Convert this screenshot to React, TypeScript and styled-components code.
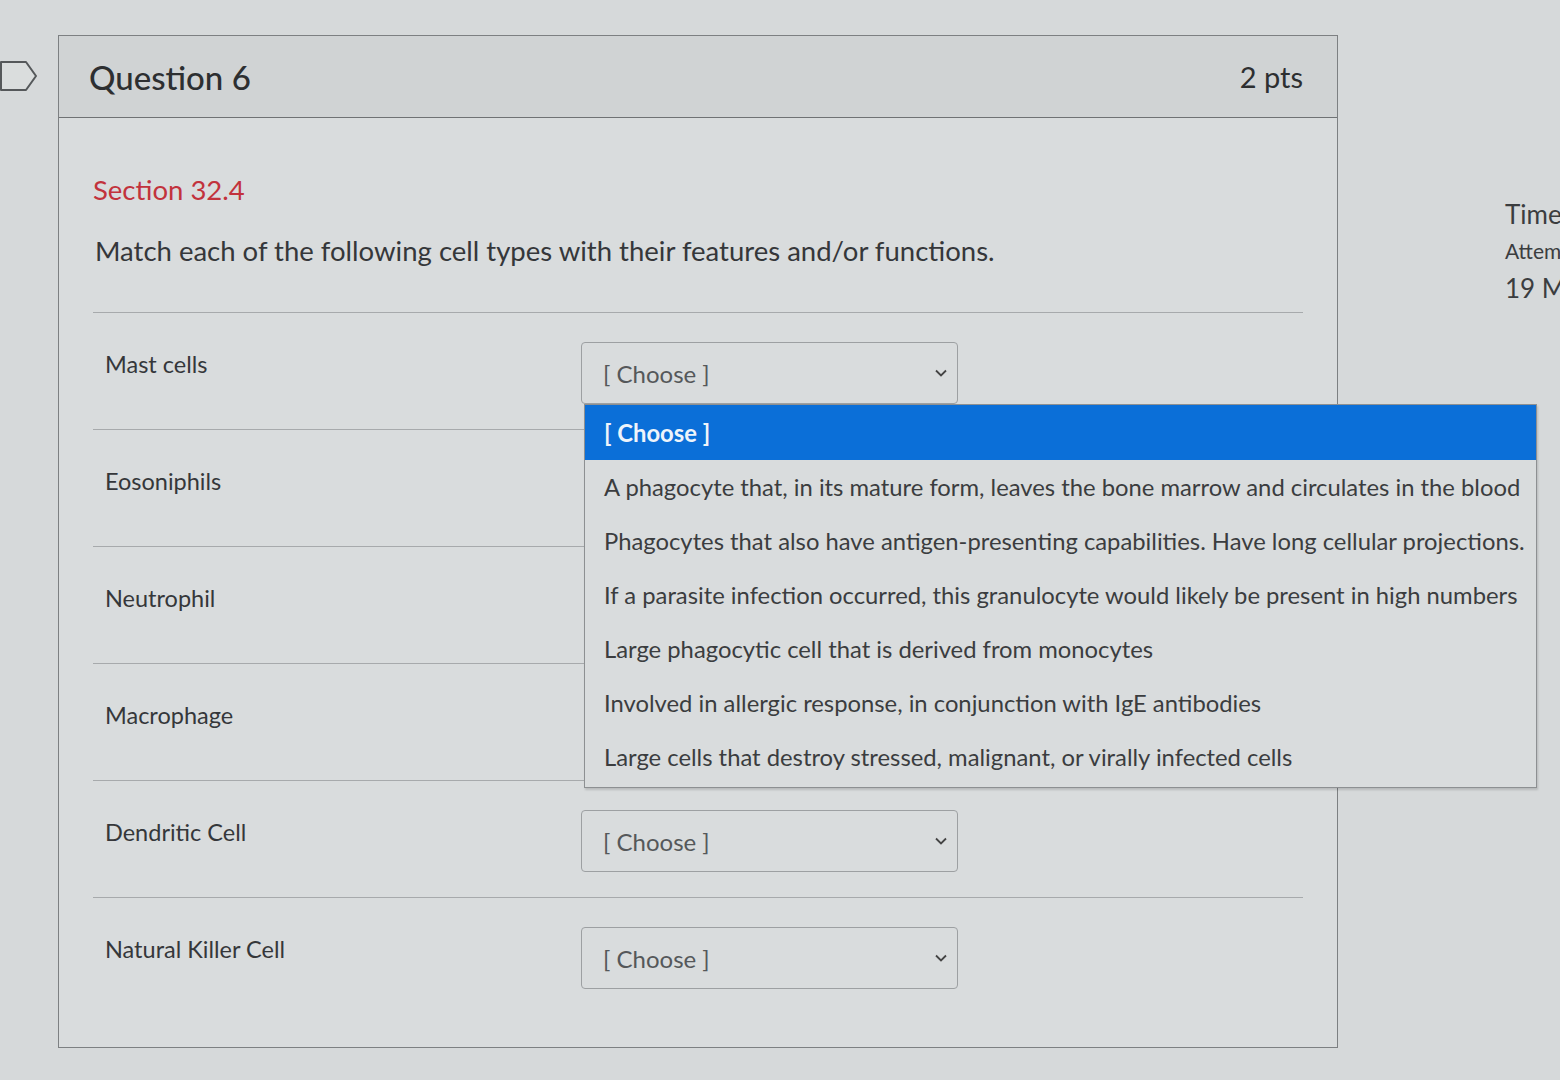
import React, { FunctionComponent } from "react";
import styled, { createGlobalStyle } from "styled-components";

const GlobalStyle = createGlobalStyle`
  html, body {
    margin: 0;
    padding: 0;
    background: #d6d9da;
    overflow: hidden;
    font-family: Lato, "Open Sans", "Liberation Sans", sans-serif;
    color: #3b3d3f;
  }
`;

const Page = styled.div`
  display: flex;
  width: 1560px;
  height: 1080px;
  background: #d6d9da;
`;

const Gutter = styled.div`
  width: 58px;
  flex-shrink: 0;
  padding-top: 60px;
  box-sizing: border-box;
`;

const Card = styled.div`
  margin-top: 35px;
  width: 1280px;
  height: 1013px;
  flex-shrink: 0;
  border: 1px solid #7d8082;
  background: #d9dcdd;
  box-sizing: border-box;
  display: flex;
  flex-direction: column;
`;

const CardHead = styled.div`
  height: 81px;
  display: flex;
  align-items: center;
  justify-content: space-between;
  padding: 0 34px 0 30px;
  background: #d0d3d4;
  border-bottom: 1px solid #6f7274;
  flex-shrink: 0;
`;

const QuestionTitle = styled.h2`
  margin: 0;
  font-size: 33px;
  font-weight: 500;
  color: #2d2f31;
`;

const Points = styled.span`
  font-size: 29px;
  color: #2d2f31;
`;

const CardBody = styled.div`
  padding: 55px 34px 0 34px;
`;

const SectionTitle = styled.p`
  margin: 0;
  font-size: 27.5px;
  color: #c2323c;
`;

const Prompt = styled.p`
  margin: 28px 0 0 2px;
  font-size: 27.5px;
  color: #35373a;
`;

const Rows = styled.div`
  margin-top: 45px;
  border-top: 1px solid #a7aaac;
`;

const Row = styled.div<{ last?: boolean }>`
  display: grid;
  grid-template-columns: 488px 377px;
  height: 117px;
  padding-top: 29px;
  box-sizing: border-box;
  border-bottom: ${(p) => (p.last ? "none" : "1px solid #a7aaac")};
`;

const Label = styled.div`
  padding: 8px 0 0 12px;
  font-size: 23.5px;
  color: #35373a;
`;

const SelectWrap = styled.div`
  position: relative;
`;

const Select = styled.div`
  height: 62px;
  display: flex;
  align-items: center;
  justify-content: space-between;
  padding: 0 8px 0 21px;
  border: 1px solid #9da0a2;
  border-radius: 4px;
  background: #d9dcdd;
  box-sizing: border-box;
  font-size: 24px;
  color: #55585a;
`;

const Options = styled.ul`
  position: absolute;
  top: 62px;
  left: 3px;
  width: 951px;
  margin: 0;
  padding: 0 0 3px 0;
  list-style: none;
  background: #d9dcdd;
  border: 1px solid #8d9092;
  box-shadow: 1px 2px 2px rgba(0, 0, 0, 0.15);
  z-index: 5;
`;

const Option = styled.li<{ active?: boolean }>`
  height: ${(p) => (p.active ? "55px" : "54px")};
  display: flex;
  align-items: center;
  padding-left: 19px;
  font-size: 23.8px;
  white-space: nowrap;
  background: ${(p) => (p.active ? "#0b6fd8" : "transparent")};
  color: ${(p) => (p.active ? "#eef4fb" : "#3b3d3f")};
  font-weight: ${(p) => (p.active ? 700 : 400)};
`;

const Sidebar = styled.div`
  margin-left: 167px;
  padding-top: 196px;
  white-space: nowrap;
  color: #3b3d3f;
`;

const SideLine = styled.div<{ small?: boolean }>`
  font-size: ${(p) => (p.small ? "21px" : "26px")};
  line-height: ${(p) => (p.small ? "38px" : "36px")};
`;

const Chevron = () => (
  <svg width="16" height="16" viewBox="0 0 16 16">
    <path d="M3 5.5 L8 10.5 L13 5.5" fill="none" stroke="#444" strokeWidth="1.8" />
  </svg>
);

const FlagIcon = () => (
  <svg width="38" height="32" viewBox="0 0 38 32">
    <path
      d="M1 2 H26 L36 16 L26 30 H1 Z"
      fill="#dadddd"
      stroke="#55585a"
      strokeWidth="2"
      strokeLinejoin="round"
    />
  </svg>
);

const cells = [
  "Mast cells",
  "Eosoniphils",
  "Neutrophil",
  "Macrophage",
  "Dendritic Cell",
  "Natural Killer Cell",
];

const choices = [
  "A phagocyte that, in its mature form, leaves the bone marrow and circulates in the blood",
  "Phagocytes that also have antigen-presenting capabilities. Have long cellular projections.",
  "If a parasite infection occurred, this granulocyte would likely be present in high numbers",
  "Large phagocytic cell that is derived from monocytes",
  "Involved in allergic response, in conjunction with IgE antibodies",
  "Large cells that destroy stressed, malignant, or virally infected cells",
];

const App: FunctionComponent<{}> = () => {
  return (
    <Page>
      <GlobalStyle />
      <Gutter>
        <FlagIcon />
      </Gutter>
      <Card>
        <CardHead>
          <QuestionTitle>Question 6</QuestionTitle>
          <Points>2 pts</Points>
        </CardHead>
        <CardBody>
          <SectionTitle>Section 32.4</SectionTitle>
          <Prompt>Match each of the following cell types with their features and/or functions.</Prompt>
          <Rows>
            {cells.map((cell, i) => (
              <Row key={cell} last={i === cells.length - 1}>
                <Label>{cell}</Label>
                {/* rows 2-4 have their select hidden behind the open list */}
                {i === 0 || i > 3 ? (
                  <SelectWrap>
                    <Select>
                      <span>[ Choose ]</span>
                      <Chevron />
                    </Select>
                    {i === 0 && (
                      <Options>
                        <Option active>[ Choose ]</Option>
                        {choices.map((c) => (
                          <Option key={c}>{c}</Option>
                        ))}
                      </Options>
                    )}
                  </SelectWrap>
                ) : (
                  <div />
                )}
              </Row>
            ))}
          </Rows>
        </CardBody>
      </Card>
      <Sidebar>
        <SideLine>Time</SideLine>
        <SideLine small>Attem</SideLine>
        <SideLine>19 M</SideLine>
      </Sidebar>
    </Page>
  );
};

export default App;
